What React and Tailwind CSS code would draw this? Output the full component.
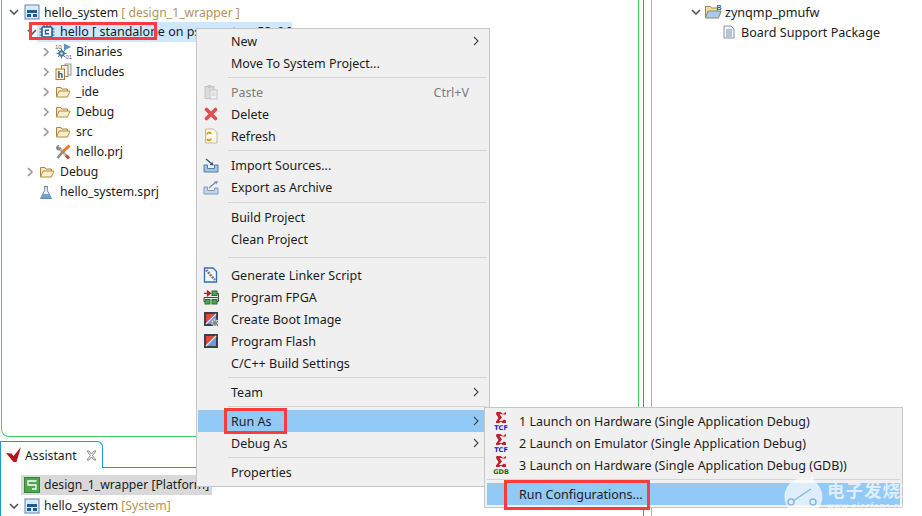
import { Fragment } from "react";

const Chevron = ({ open, dark, className = "" }) => (
  <svg width="12" height="12" viewBox="0 0 12 12" className={`shrink-0 ${className}`} fill="none" stroke={dark ? "#555" : "#9a9a9a"} strokeWidth="1.6">
    {open ? <path d="M2 4l4 4 4-4" /> : <path d="M4 2l4 4-4 4" />}
  </svg>
);

const SystemIcon = () => (
  <svg width="16" height="16" viewBox="0 0 16 16" className="shrink-0">
    <rect x="1" y="1" width="14" height="14" fill="#dfe8f2" stroke="#5c86ad" />
    <rect x="3" y="6" width="10" height="3" fill="#1f5a96" />
    <rect x="3" y="10" width="4" height="3" fill="#1f5a96" />
    <rect x="9" y="10" width="4" height="3" fill="#1f5a96" />
  </svg>
);

const ChipIcon = () => (
  <svg width="16" height="16" viewBox="0 0 16 16" className="shrink-0">
    <rect x="3" y="3" width="10" height="10" rx="1" fill="#fff" stroke="#1f5f94" strokeWidth="1.6" />
    <path d="M5 0.500v2.500M8 0.500v2.500M11 0.500v2.500M5 13v2.500M8 13v2.500M11 13v2.500M0.500 5h2.500M0.500 8h2.500M0.500 11h2.500M13 5h2.500M13 8h2.500M13 11h2.500" stroke="#1f5f94" strokeWidth="1.200" />
    <path d="M10 6.200H6.500v3.600H10" fill="none" stroke="#1f5f94" strokeWidth="1.400" />
  </svg>
);

const Folder = () => (
  <svg width="16" height="16" viewBox="0 0 16 16" className="shrink-0">
    <path d="M1.500 13V3.500h4.500l1 1.500h5.500v2" fill="#f6e5bd" stroke="#a8864a" />
    <path d="M1.500 13l2.500-6h11l-2.500 6z" fill="#fbeecb" stroke="#b58c44" />
  </svg>
);

const BspFolder = () => (
  <svg width="20" height="18" viewBox="0 0 20 18" className="shrink-0">
    <path d="M1.500 15V3.500h5l1 1.500h6v3" fill="#f3dca6" stroke="#a8864a" />
    <path d="M1.500 15l2.500-7h13l-2.500 7z" fill="#a9cbe8" stroke="#8a8a6a" />
    <text x="12.500" y="7" fontSize="7" fontWeight="700" fill="#2b5f96" fontFamily="Liberation Sans, sans-serif">B</text>
  </svg>
);

const BinariesIcon = () => (
  <svg width="18" height="18" viewBox="0 0 18 18" className="shrink-0">
    <text x="0" y="5.500" fontSize="6" fill="#666" fontFamily="Liberation Sans, sans-serif">10</text>
    <text x="10.500" y="16" fontSize="6" fill="#666" fontFamily="Liberation Sans, sans-serif">01</text>
    <path d="M9 0.500l7 3.500-7 3.500z" fill="#5d93bd" />
    <circle cx="6.500" cy="10.500" r="3.200" fill="#4d7a9c" />
    <path d="M6.500 5.500v10M1.500 10.500h10M3 7l7 7M10 7l-7 7" stroke="#4d7a9c" />
    <circle cx="6.500" cy="10.500" r="1.200" fill="#d5e4ef" />
  </svg>
);

const IncludesIcon = () => (
  <svg width="17" height="18" viewBox="0 0 17 18" className="shrink-0">
    <rect x="10" y="1" width="6" height="11" fill="#eee" stroke="#999" />
    <rect x="6.500" y="2.500" width="6.500" height="11" fill="#f4f4f4" stroke="#a08a5e" />
    <rect x="1" y="6" width="8.500" height="10.500" fill="#fdf2d4" stroke="#a5803f" />
    <text x="2.500" y="14.500" fontSize="9" fontWeight="700" fill="#22507a" fontFamily="Liberation Sans, sans-serif">h</text>
  </svg>
);

const ToolsIcon = () => (
  <svg width="16" height="16" viewBox="0 0 16 16" className="shrink-0">
    <path d="M3.500 3.500l9.500 10" stroke="#b5b5b5" strokeWidth="3" />
    <path d="M1 4.500a3 3 0 0 1 3.500-3.500L3.500 3l1 1L6 3a3 3 0 0 1-3.500 3.500z" fill="#8a8a8a" />
    <path d="M14.500 1.500L7 8.500" stroke="#ea7b22" strokeWidth="3" />
    <path d="M7.500 8L2.500 14" stroke="#8c8c8c" strokeWidth="2.600" />
    <path d="M11 11.500l3 3" stroke="#c8462a" strokeWidth="3" />
  </svg>
);

const FlaskIcon = () => (
  <svg width="14" height="15" viewBox="0 0 14 15" className="shrink-0">
    <path d="M5 1.500h4M5.700 1.500v4L1.500 13.500h11L8.300 5.500v-4" fill="#eef3f8" stroke="#6a86a5" />
    <path d="M3.800 9h6.400l2 4H2z" fill="#6da4d6" />
  </svg>
);

const PasteIcon = () => (
  <svg width="14" height="16" viewBox="0 0 14 16">
    <rect x="1" y="2.500" width="9" height="12" fill="#dcdcdc" stroke="#c4c4c4" />
    <rect x="3.500" y="1" width="4" height="3" fill="#c8c8c8" />
    <rect x="6" y="6" width="7" height="9" fill="#f0f0f0" stroke="#c4c4c4" />
    <path d="M7.500 9h4M7.500 11h4" stroke="#d0d0d0" />
  </svg>
);

const DeleteIcon = () => (
  <svg width="14" height="14" viewBox="0 0 14 14">
    <path d="M2.500 2.500l9 9M11.500 2.500l-9 9" stroke="#e0504f" strokeWidth="3.600" strokeLinecap="round" />
  </svg>
);

const RefreshIcon = () => (
  <svg width="14" height="16" viewBox="0 0 14 16">
    <path d="M1.500 1h8l3.500 3.500v10.500h-11.500z" fill="#fdf8ea" stroke="#c4b88f" />
    <path d="M3 6.500c0-2 3-2.500 4-1M7 10.500c0 2-3 2.500-4 1" fill="none" stroke="#cf9d26" strokeWidth="1.800" />
    <path d="M6 3.500l2 2-2.500.5zM4 13l-2-2 2.500-.5z" fill="#cf9d26" />
  </svg>
);

const ImportIcon = () => (
  <svg width="16" height="15" viewBox="0 0 16 15">
    <path d="M1 7v7h14V7h-3.500v3.500h-7V7z" fill="#a8c4de" stroke="#4f7ca6" />
    <path d="M3 1l6 5" stroke="#24588f" strokeWidth="1.300" />
    <path d="M10.500 7.500l-4-.5 3-3z" fill="#24588f" />
  </svg>
);

const ExportIcon = () => (
  <svg width="16" height="15" viewBox="0 0 16 15">
    <path d="M1 7v7h14V8h-3.500v2.500h-7V7z" fill="#c6d6e6" stroke="#7d9dbb" />
    <path d="M6 8l7-6" stroke="#6f93b5" strokeWidth="1.300" />
    <path d="M15 1l-4 .5 2.500 3z" fill="#6f93b5" />
  </svg>
);

const LinkerIcon = () => (
  <svg width="15" height="16" viewBox="0 0 15 16">
    <path d="M1.500 1h8.500l3.500 3.500v10.500h-12z" fill="#f4f8fc" stroke="#2c6fb5" strokeWidth="1.300" />
    <path d="M3 3l9 10" stroke="#777" strokeWidth="2.600" strokeDasharray="2 1" />
  </svg>
);

const FpgaIcon = () => (
  <svg width="16" height="15" viewBox="0 0 16 15">
    <path d="M1 7.500h14.500V3.500H14M1 7.500v4h1M15.500 7.500v4H14" stroke="#444" fill="none" />
    <rect x="9" y="1" width="5" height="4.500" fill="#4ba34b" stroke="#2d6b2d" />
    <rect x="2" y="9.500" width="5" height="4.500" fill="#4ba34b" stroke="#2d6b2d" />
    <rect x="9" y="9.500" width="5" height="4.500" fill="#4ba34b" stroke="#2d6b2d" />
    <path d="M1 3.300h4M4.500 1l3 2.300-3 2.300z" fill="#a8282c" stroke="#a8282c" strokeWidth="1.300" />
  </svg>
);

const FlashTile = ({ gear }) => (
  <svg width="16" height="16" viewBox="0 0 16 16">
    <rect x="1" y="1" width="14" height="14" fill="#3a3f48" />
    <path d="M3 13V3h9z" fill="#df4a38" />
    <path d="M3.500 13L13 3.500V13z" fill="#6d9be0" />
    <path d="M3 13L13 3" stroke="#e8e8f0" strokeWidth="1.200" />
    {gear && <circle cx="12" cy="12" r="3" fill="#8a8a8a" stroke="#e4e4e4" strokeDasharray="1.500 1" strokeWidth="1.500" />}
  </svg>
);

const SigmaIcon = ({ label, color }) => (
  <svg width="16" height="20" viewBox="0 0 16 20">
    <path d="M3.500 1h4L10 3l3-2v2.500h-3L8 3H6.500L9 6.500 6 10h3l2-1.500 2 1V12H9.500L8 10.800 6 12H3v-1.500L5.500 7 3 3z" fill="#c21f2c" />
    <text x="8" y="18.800" textAnchor="middle" fontSize="6.500" fontWeight="700" fill={color} fontFamily="DejaVu Sans, sans-serif">{label}</text>
  </svg>
);

const AssistantIcon = () => (
  <svg width="16" height="16" viewBox="0 0 16 16" className="shrink-0">
    <path d="M0 6l5.500.5L7.500 9 15 0l-4.500 15H7.500z" fill="#b3161b" />
  </svg>
);

const PlatformIcon = () => (
  <svg width="16" height="16" viewBox="0 0 16 16" className="shrink-0">
    <rect x="0.500" y="0.500" width="15" height="15" fill="#4fa54f" stroke="#388338" />
    <path d="M12.500 4H4v4h8v4H8" fill="none" stroke="#fff" strokeWidth="1.300" />
  </svg>
);

const rootRows = [
  { indent: "pl-[36px]", chevron: "closed", icon: <BinariesIcon />, label: "Binaries" },
  { indent: "pl-[36px]", chevron: "closed", icon: <IncludesIcon />, label: "Includes" },
  { indent: "pl-[36px]", chevron: "closed", icon: <Folder />, label: "_ide" },
  { indent: "pl-[36px]", chevron: "closed", icon: <Folder />, label: "Debug" },
  { indent: "pl-[36px]", chevron: "closed", icon: <Folder />, label: "src" },
  { indent: "pl-[36px]", icon: <ToolsIcon />, label: "hello.prj" },
  { indent: "pl-[20px]", chevron: "closed", icon: <Folder />, label: "Debug" },
  { indent: "pl-[20px]", icon: <FlaskIcon />, label: "hello_system.sprj" },
];

const menuGroups = [
  { sep: "h-[7px]", items: [{ label: "New", arrow: true }, { label: "Move To System Project..." }] },
  {
    sep: "h-[7px]",
    items: [
      { label: "Paste", icon: <PasteIcon />, disabled: true, hint: "Ctrl+V" },
      { label: "Delete", icon: <DeleteIcon /> },
      { label: "Refresh", icon: <RefreshIcon /> },
    ],
  },
  { sep: "h-[8px]", items: [{ label: "Import Sources...", icon: <ImportIcon /> }, { label: "Export as Archive", icon: <ExportIcon /> }] },
  { sep: "h-[14px]", items: [{ label: "Build Project" }, { label: "Clean Project" }] },
  {
    sep: "h-[7px]",
    items: [
      { label: "Generate Linker Script", icon: <LinkerIcon /> },
      { label: "Program FPGA", icon: <FpgaIcon /> },
      { label: "Create Boot Image", icon: <FlashTile gear /> },
      { label: "Program Flash", icon: <FlashTile /> },
      { label: "C/C++ Build Settings" },
    ],
  },
  { sep: "h-[7px]", items: [{ label: "Team", arrow: true }] },
  { sep: "h-[7px]", items: [{ label: "Run As", arrow: true, active: true }, { label: "Debug As", arrow: true }] },
  { items: [{ label: "Properties" }] },
];

const subItems = [
  { label: "1 Launch on Hardware (Single Application Debug)", tag: "TCF", color: "#1420c8" },
  { label: "2 Launch on Emulator (Single Application Debug)", tag: "TCF", color: "#1420c8" },
  { label: "3 Launch on Hardware (Single Application Debug (GDB))", tag: "GDB", color: "#0c6a1c" },
];

function MenuRow({ item }) {
  return (
    <div className={`flex h-[22px] items-center ${item.active ? "bg-[#91c9f7]" : ""}`}>
      <div className="flex w-[32px] shrink-0 items-center justify-center pr-[7px]">{item.icon}</div>
      <span className={`pl-[1px] pt-[2px] ${item.disabled ? "text-[#7b7b7b]" : ""}`}>{item.label}</span>
      {item.hint && <span className="ml-auto pr-[20px] pt-[2px] text-[#7b7b7b]">{item.hint}</span>}
      {item.arrow && (
        <svg width="8" height="10" viewBox="0 0 8 10" fill="none" stroke="#444" strokeWidth="1.100" className="ml-auto mr-[9px]">
          <path d="M2 1l4 4-4 4" />
        </svg>
      )}
    </div>
  );
}

export default function App() {
  return (
    <div className="relative flex h-[516px] w-[922px] overflow-hidden bg-white text-[12.500px] leading-[20px] text-[#1c1c1c] [font-family:'Noto_Sans','Noto_Sans_CJK_SC',sans-serif]">
      {/* Left column: project explorer + assistant */}
      <div className="flex h-full w-[644px] shrink-0 flex-col border-r border-[#1b9ad6] text-[12.200px]">
        <div className="ml-[1px] h-[437px] w-[638px] shrink-0 rounded-b-[8px] border-x border-b border-[#3fcf62] pt-[2px]">
          <div className="flex h-[20px] items-center gap-[4px] pl-[6px]">
            <Chevron open dark />
            <SystemIcon />
            <span className="pt-[2px]">hello_system <span className="text-[#b39458]">[ design_1_wrapper ]</span></span>
          </div>
          <div className="ml-[35px] flex h-[20px] w-[255px] items-center gap-[4px] bg-[#cde8ff]">
            <div className="-ml-[11px]"><Chevron open dark /></div>
            <div className="-ml-[3px]"><ChipIcon /></div>
            <span className="whitespace-nowrap pl-[1px] text-[12.500px]">hello [ standalone on psu_cortexa53_0 ]</span>
          </div>
          {rootRows.map((row) => (
            <div key={row.label + row.indent} className={`flex h-[20px] items-center ${row.indent}`}>
              <div className="w-[14px] shrink-0 pl-[2px]">{row.chevron && <Chevron />}</div>
              <div className="flex w-[24px] shrink-0 items-center pl-[3px]">{row.icon}</div>
              <span>{row.label}</span>
            </div>
          ))}
        </div>

        <div className="mt-[4px] flex min-h-0 flex-1 flex-col border-l border-[#1b9ad6]">
          <div className="flex h-[27px] shrink-0">
            <div className="flex w-[102px] shrink-0 items-center gap-[3px] rounded-tr-[6px] border-t border-r border-[#1b9ad6] pl-[5px]">
              <AssistantIcon />
              <span className="pt-[2px]">Assistant</span>
              <svg width="11" height="11" viewBox="0 0 11 11" className="ml-[6px]" fill="none" stroke="#8a8a8a">
                <path d="M1 1l3.500 4.500L1 10M10 1L6.500 5.500 10 10M1 1h2l2.500 3L8 1h2M1 10h2l2.500-3L8 10h2" />
              </svg>
            </div>
            <div className="flex-1 border-b border-[#1b9ad6]" />
          </div>
          <div className="ml-[20px] mt-[7px] flex h-[20px] w-[191px] items-center gap-[4px] bg-[#d9d9d9] pl-[3px]">
            <PlatformIcon />
            <span className="whitespace-nowrap">design_1_wrapper [Platform]</span>
          </div>
          <div className="flex h-[20px] items-center gap-[4px] pl-[7px] pt-[1px]">
            <Chevron open dark />
            <SystemIcon />
            <span>hello_system <span className="text-[#b39458]">[System]</span></span>
          </div>
        </div>
      </div>

      {/* Right pane */}
      <div className="ml-[7px] h-full flex-1 border-l border-[#b0b0b0] pt-[2px] text-[12.600px]">
        <div className="flex h-[20px] items-center pl-[38px]">
          <Chevron open dark />
          <div className="ml-[2px]"><BspFolder /></div>
          <span className="pl-[1px] pt-[2px]">zynqmp_pmufw</span>
        </div>
        <div className="flex h-[20px] items-center gap-[6px] pl-[71px]">
          <svg width="12" height="14" viewBox="0 0 12 14">
            <path d="M1 1h7l3 3v9H1z" fill="#f4f7fb" stroke="#8494ad" />
            <path d="M3 5h6M3 7h6M3 9h6M3 11h6" stroke="#7c8ca8" />
          </svg>
          <span className="pt-[2px]">Board Support Package</span>
        </div>
      </div>

      {/* Context menu */}
      <div className="absolute left-[196px] top-[28px] w-[294px] border border-[#c6c6c6] bg-[#f0f0f0] pb-[3px] pl-[1px] pt-[1px]">
        {menuGroups.map((group, i) => (
          <Fragment key={i}>
            {group.items.map((item) => <MenuRow key={item.label} item={item} />)}
            {group.sep && (
              <div className={`flex items-center pl-[30px] pr-[2px] ${group.sep}`}>
                <div className="h-px w-full bg-[#d5d5d5]" />
              </div>
            )}
          </Fragment>
        ))}
      </div>

      {/* Run As submenu */}
      <div className="absolute left-[484px] top-[407px] w-[419px] border border-[#c6c6c6] bg-[#f0f0f0] px-[2px] pt-[2px]">
        {subItems.map((s) => (
          <div key={s.label} className="flex h-[22px] items-center">
            <div className="flex w-[30px] shrink-0 justify-center pr-[3px]">
              <SigmaIcon label={s.tag} color={s.color} />
            </div>
            <span className="pl-[2px] pt-[2px]">{s.label}</span>
          </div>
        ))}
        <div className="flex h-[7px] items-center"><div className="h-px w-full bg-[#d5d5d5]" /></div>
        <div className="mb-[2px] flex h-[22px] items-center bg-[#91c9f7] pl-[32px] pt-[2px]">Run Configurations...</div>
      </div>

      {/* Red highlight boxes */}
      <div className="absolute left-[29px] top-[22px] h-[18px] w-[128px] border-[3px] border-[#fb3b3f]" />
      <div className="absolute left-[224px] top-[408px] h-[26px] w-[63px] border-[3px] border-[#fb3b3f]" />
      <div className="absolute left-[504px] top-[480px] h-[30px] w-[146px] border-[3px] border-[#fb3b3f]" />

      {/* Watermark */}
      <div className="absolute left-[782px] top-[474px] flex items-start opacity-70">
        <svg width="46" height="42" viewBox="0 0 46 42">
          <path d="M30 0c1 6 4 8 7 12a19 19 0 1 1-9-7z" fill="#fff" />
          <path d="M11 27L29 15" stroke="#7fb3dd" strokeWidth="1.500" />
          <circle cx="9" cy="28" r="3" fill="none" stroke="#7fb3dd" strokeWidth="1.500" />
          <circle cx="31" cy="28" r="3" fill="none" stroke="#7fb3dd" strokeWidth="1.500" />
        </svg>
        <div className="-ml-[1px] mt-[5px] flex flex-col text-white">
          <span className="whitespace-nowrap text-[17.500px] font-bold leading-[22px] tracking-[1px]">电子发烧友</span>
          <span className="whitespace-nowrap text-[8px] leading-[10px] tracking-[1px]">www.elecfans.com</span>
        </div>
      </div>
    </div>
  );
}
